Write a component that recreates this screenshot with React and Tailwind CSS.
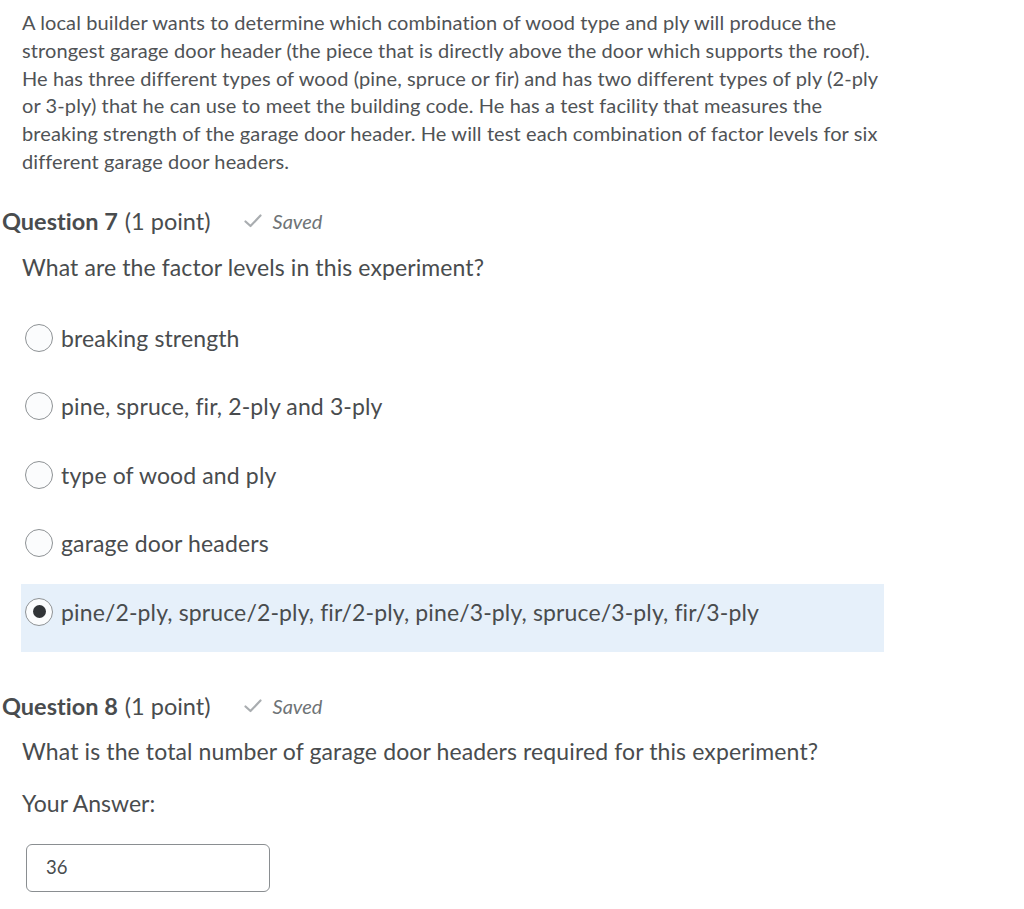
function Radio({ checked }) {
  return (
    <span className="flex h-[28px] w-[28px] shrink-0 items-center justify-center rounded-full border-[1.5px] border-[#8e9295] bg-[#fbfcfd]">
      {checked && <span className="h-[13px] w-[13px] rounded-full bg-[#313437]" />}
    </span>
  );
}

function Saved() {
  return (
    <span className="ml-[33px] flex items-center gap-[11px] text-[20px] italic text-[#6e7376]">
      <svg width="18" height="14" viewBox="0 0 18 14" fill="none">
        <path d="M1.5 7.5 L6.5 12 L16.5 1.5" stroke="#a9adb0" strokeWidth="2.2" strokeLinecap="round" strokeLinejoin="round" />
      </svg>
      Saved
    </span>
  );
}

function QuestionHead({ num, className }) {
  return (
    <div className={`flex items-center pl-[2px] text-[23.5px] leading-[30px] text-[#494c4e] ${className}`}>
      <span className="font-bold">Question {num}</span>
      <span className="ml-[7px]">(1 point)</span>
      <Saved />
    </div>
  );
}

const options = [
  'breaking strength',
  'pine, spruce, fir, 2-ply and 3-ply',
  'type of wood and ply',
  'garage door headers',
  'pine/2-ply, spruce/2-ply, fir/2-ply, pine/3-ply, spruce/3-ply, fir/3-ply',
];

export default function App() {
  return (
    <div className="min-h-screen bg-white font-['Lato','Noto_Sans',sans-serif] text-[#494c4e] [font-variant-ligatures:none]">
      <p className="w-[886px] pl-[22px] pt-[9px] text-[20px] leading-[27.8px] tracking-[0.1px] text-[#505356]">
        A local builder wants to determine which combination of wood type and ply will produce the strongest garage
        door header (the piece that is directly above the door which supports the roof). He has three different
        types of wood (pine, spruce or fir) and has two different types of ply (2-ply or 3-ply) that he can use to
        meet the building code. He has a test facility that measures the breaking strength of the garage door header.
        He will test each combination of factor levels for six different garage door headers.
      </p>

      <QuestionHead num={7} className="mt-[30px]" />
      <p className="mt-[16px] pl-[22px] text-[23px] leading-[30px] tracking-[0.1px]">
        What are the factor levels in this experiment?
      </p>

      <div className="mt-[28px] flex flex-col">
        {options.map((o, i) => {
          const sel = i === 4;
          return (
            <div
              key={o}
              className={`ml-[21px] h-[68.5px] w-[863px] pl-[4px] pt-[13px] ${sel ? 'bg-[#e6f0fa]' : ''}`}
            >
              <div className="flex items-center gap-[8px] text-[23px] leading-[30px] tracking-[0.13px]">
                <Radio checked={sel} />
                <span>{o}</span>
              </div>
            </div>
          );
        })}
      </div>

      <QuestionHead num={8} className="mt-[39px]" />
      <p className="mt-[15px] pl-[22px] text-[23px] leading-[30px] tracking-[0.12px]">
        What is the total number of garage door headers required for this experiment?
      </p>
      <p className="mt-[22px] pl-[22px] text-[23px] leading-[30px]">Your Answer:</p>
      <div className="ml-[26px] mt-[26px] flex h-[48px] w-[244px] items-center rounded-[6px] border border-[#8a8e91] pl-[19px] text-[18.5px] text-[#494c4e]">
        36
      </div>
    </div>
  );
}
